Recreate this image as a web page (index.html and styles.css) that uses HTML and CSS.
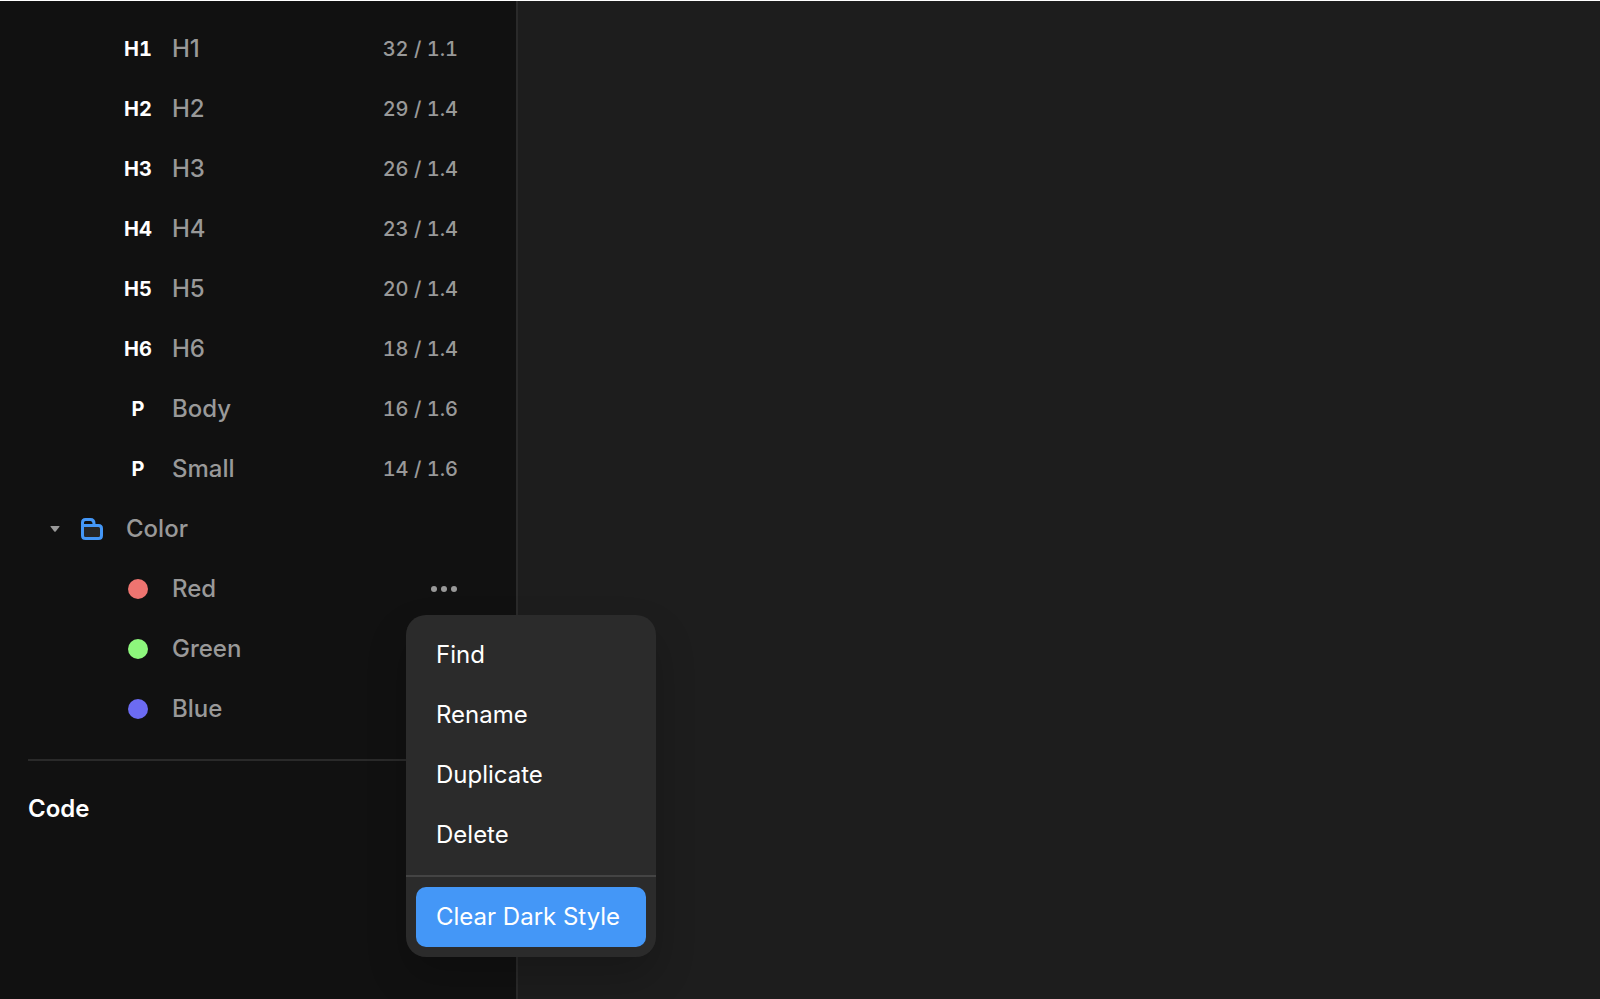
FILE: index.html
```
<!DOCTYPE html>
<html lang="en">
<head>
    <meta charset="UTF-8">
    <meta name="viewport" content="width=device-width, initial-scale=1.0">
    <title>Styles</title>
    <link rel="stylesheet" href="styles.css">
</head>
<body>
    <aside class="sidebar">
        <ul class="style-list">
            <li class="row"><span class="badge">H1</span><span class="name">H1</span><span class="value">32 / 1.1</span></li>
            <li class="row"><span class="badge">H2</span><span class="name">H2</span><span class="value">29 / 1.4</span></li>
            <li class="row"><span class="badge">H3</span><span class="name">H3</span><span class="value">26 / 1.4</span></li>
            <li class="row"><span class="badge">H4</span><span class="name">H4</span><span class="value">23 / 1.4</span></li>
            <li class="row"><span class="badge">H5</span><span class="name">H5</span><span class="value">20 / 1.4</span></li>
            <li class="row"><span class="badge">H6</span><span class="name">H6</span><span class="value">18 / 1.4</span></li>
            <li class="row"><span class="badge">P</span><span class="name">Body</span><span class="value">16 / 1.6</span></li>
            <li class="row"><span class="badge">P</span><span class="name">Small</span><span class="value">14 / 1.6</span></li>
        </ul>

        <button class="folder" aria-expanded="true">
            <svg class="caret" width="10" height="6" viewBox="0 0 10 6"><path d="M1 0H9Q10 0 9.4 .8L5.7 5.4Q5 6 4.3 5.4L.6 .8Q0 0 1 0Z" fill="#999"/></svg>
            <svg class="folder-icon" width="22" height="22" viewBox="0 0 22 22" stroke="#4497f7" stroke-width="3" stroke-linejoin="round">
                <path d="M1.5 7.5V4.5Q1.5 1.5 4.5 1.5H9.5Q13 1.5 13 5.5V7.5" fill="none"/>
                <path d="M1.5 7.5H17.5Q20.5 7.5 20.5 10.5V17.5Q20.5 20.5 17.5 20.5H4.5Q1.5 20.5 1.5 17.5Z" fill="#262626"/>
            </svg>
            Color
        </button>

        <ul class="color-list">
            <li class="row">
                <span class="badge"><span class="dot red"></span></span>
                <span class="name">Red</span>
                <button class="more" aria-label="More options" aria-expanded="true">
                    <svg width="27" height="6" viewBox="0 0 27 6" fill="#999"><circle cx="3" cy="3" r="3"/><circle cx="13" cy="3" r="3"/><circle cx="23" cy="3" r="3"/></svg>
                </button>
                <div class="menu">
                    <div class="menu-group">
                        <button class="menu-item">Find</button>
                        <button class="menu-item">Rename</button>
                        <button class="menu-item">Duplicate</button>
                        <button class="menu-item">Delete</button>
                    </div>
                    <div class="menu-group">
                        <button class="menu-item active">Clear Dark Style</button>
                    </div>
                </div>
            </li>
            <li class="row"><span class="badge"><span class="dot green"></span></span><span class="name">Green</span></li>
            <li class="row"><span class="badge"><span class="dot blue"></span></span><span class="name">Blue</span></li>
        </ul>

        <section class="code">
            <h2>Code</h2>
        </section>
    </aside>

    <main class="canvas"></main>
</body>
</html>
```
FILE: styles.css
```
:root {
    --sidebar-bg: #111;
    --canvas-bg: #1d1d1d;
    --menu-bg: #2b2b2b;
    --line: #2a2a2a;
    --text: #fff;
    --text-muted: #999;
    --accent: #4497f7;
}

* {
    margin: 0;
    padding: 0;
    box-sizing: border-box;
}

body {
    font-family: Inter, sans-serif;
    font-size: 24px;
    font-weight: 500;
    line-height: 30px;
    color: var(--text-muted);
    background-color: var(--canvas-bg);
    min-height: 100vh;
    display: flex;
    border-top: 1px solid #fff;
}

ul {
    list-style: none;
}

button {
    font: inherit;
    color: inherit;
    background: none;
    border: none;
    text-align: left;
    cursor: pointer;
}

svg {
    display: block;
}

.sidebar {
    width: 518px;
    flex-shrink: 0;
    padding-top: 18px;
    background-color: var(--sidebar-bg);
    border-right: 2px solid var(--line);
}

.canvas {
    flex: 1;
}

.row {
    position: relative;
    display: flex;
    align-items: center;
    gap: 16px;
    height: 60px;
    padding: 0 58px 0 120px;
}

.badge {
    display: flex;
    justify-content: center;
    width: 36px;
    font-size: 20px;
    font-weight: 700;
    font-variant-numeric: tabular-nums;
    color: var(--text);
}

.name {
    flex: 1;
}

.value {
    font-size: 20px;
    font-variant-numeric: tabular-nums;
}

.folder {
    display: flex;
    align-items: center;
    width: 100%;
    height: 60px;
    padding-left: 50px;
}

.folder-icon {
    margin: 0 23px 0 21px;
}

/* Colors */
.dot {
    width: 20px;
    height: 20px;
    border-radius: 50%;
}

.red {
    background-color: #ee7470;
}

.green {
    background-color: #8df77c;
}

.blue {
    background-color: #6c6bf2;
}

/* Context menu */
.menu {
    position: absolute;
    top: 56px;
    left: 406px;
    z-index: 10;
    width: 250px;
    font-weight: 400;
    color: var(--text);
    background-color: var(--menu-bg);
    border-radius: 20px;
    box-shadow: 0 20px 40px rgba(0, 0, 0, 0.2);
}

.menu-group {
    padding: 10px;
}

.menu-group + .menu-group {
    border-top: 2px solid #444;
}

.menu-item {
    display: block;
    width: 100%;
    height: 60px;
    padding: 0 20px;
    border-radius: 10px;
    white-space: nowrap;
}

.menu-item.active {
    background-color: var(--accent);
}

.code {
    margin: 20px 28px 0;
    padding: 33px 0;
    border-top: 2px solid var(--line);
}

.code h2 {
    font-size: 24px;
    font-weight: 600;
    color: var(--text);
}
```
